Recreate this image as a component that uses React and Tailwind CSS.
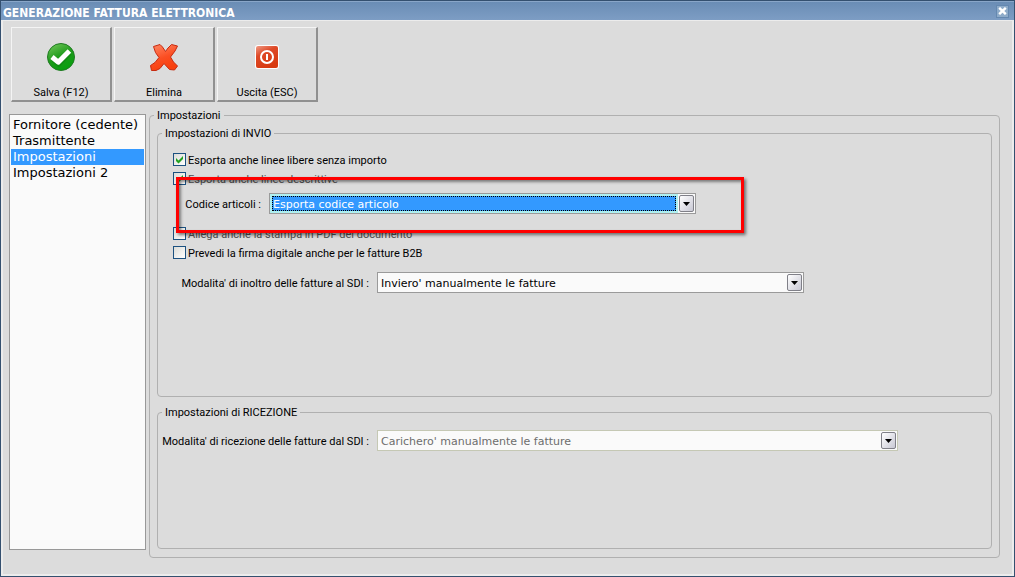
import React from "react";

function SaveIcon() {
  return (
    <svg width="30" height="30" viewBox="0 0 30 30" aria-hidden="true">
      <defs>
        <linearGradient id="save-fill" x1="0.2" y1="0" x2="0.7" y2="1">
          <stop offset="0" stopColor="#6cc455" />
          <stop offset="0.5" stopColor="#1c9a1a" />
          <stop offset="1" stopColor="#05a00c" />
        </linearGradient>
      </defs>
      <circle cx="15" cy="15" r="13.5" fill="url(#save-fill)" stroke="#1f7a22" />
      <path d="M7 17 L12.6 22 L23.8 11" fill="none" stroke="#0c7a10" strokeOpacity="0.5" strokeWidth="5" />
      <path d="M6 15 L12.2 20.2 L23.4 9" fill="none" stroke="#fff" strokeWidth="5" strokeLinejoin="round" />
    </svg>
  );
}

function DeleteIcon() {
  return (
    <svg width="30" height="30" viewBox="0 0 30 30" aria-hidden="true">
      <defs>
        <linearGradient id="delete-fill" x1="0" y1="0" x2="0.4" y2="1">
          <stop offset="0" stopColor="#ff8a68" />
          <stop offset="0.6" stopColor="#fb4e22" />
          <stop offset="1" stopColor="#f8400e" />
        </linearGradient>
      </defs>
      <path
        d="M4.5 4.5 L11 2.5 L13.5 5 L16.5 9.5 L19 6 L22.5 2.5 L28.5 4 L26 9 L21.5 15 L24.5 20 L28.5 24 L25.5 28 L20.5 27.5 L15 21.5 L11 26.5 L7 28.5 L2.5 28.5 L1.5 23.5 L6 20.5 L10 15.5 L6.5 10.5 Z"
        fill="url(#delete-fill)"
        stroke="#c62a10"
        strokeLinejoin="round"
      />
    </svg>
  );
}

function ExitIcon() {
  return (
    <svg width="30" height="30" viewBox="0 0 30 30" aria-hidden="true">
      <defs>
        <linearGradient id="exit-fill" x1="0" y1="0" x2="0.5" y2="1">
          <stop offset="0" stopColor="#f09a84" />
          <stop offset="0.4" stopColor="#de4a28" />
          <stop offset="1" stopColor="#d83a10" />
        </linearGradient>
      </defs>
      <rect x="3" y="3" width="24" height="24" rx="3" fill="#fff" />
      <rect x="4" y="4" width="22" height="22" rx="2" fill="url(#exit-fill)" />
      <circle cx="15" cy="15" r="6" fill="none" stroke="#fff" strokeWidth="2" />
      <path d="M15 12 V18" stroke="#fff" strokeWidth="2" />
    </svg>
  );
}

function ToolButton({ icon, children }) {
  return (
    <button
      type="button"
      className="flex h-[75px] w-[101px] flex-col items-center justify-between border-t border-l border-r-2 border-b-2 border-t-[#f4f4f4] border-l-[#f4f4f4] border-r-[#909090] border-b-[#909090] bg-[#dcdcdc] pt-[14px] leading-[14px]"
    >
      {icon}
      {children}
    </button>
  );
}

function Group({ title, className, bodyClass, children }) {
  return (
    <fieldset className={"flex min-w-0 flex-col rounded border border-[#b0b0b0] " + className}>
      <legend className="ml-1 px-[3px] pt-0.5 leading-3">{title}</legend>
      <div className={"flex flex-1 flex-col " + bodyClass}>{children}</div>
    </fieldset>
  );
}

function CheckRow({ id, checked, dimmed, children }) {
  return (
    <div className="flex h-[19px] items-center gap-0.5 pl-[15px]">
      <span className="grid">
        <input
          id={id}
          type="checkbox"
          defaultChecked={checked}
          className="peer col-start-1 row-start-1 size-[13px] appearance-none border border-[#1c5180] bg-linear-to-br from-[#dcdcd7] to-white"
        />
        <svg
          viewBox="0 0 13 13"
          aria-hidden="true"
          className="pointer-events-none invisible col-start-1 row-start-1 size-[13px] peer-checked:visible"
        >
          <path d="M3 5 L5.5 7.5 L10 3 V6 L5.5 10.5 L3 8 Z" fill="#21a121" />
        </svg>
      </span>
      <label htmlFor={id} className={"pt-0.5 " + (dimmed ? "text-[#505050]" : "text-black")}>
        {children}
      </label>
    </div>
  );
}

function Combo({ id, value, variant = "normal", className }) {
  const border = variant === "disabled" ? "border-[#c5c8b4]" : "border-[#9a9a9a]";
  const text =
    variant === "active" ? "text-white" : variant === "disabled" ? "text-[#6d6d6d]" : "text-black";
  return (
    <div className={"relative h-[21px] min-w-0 border bg-[#fafafa] " + border + " " + className}>
      {variant === "active" && (
        <span className="absolute inset-y-0 left-0 right-[17px] border-2 border-[#b0f0f0] bg-[#3399ff] outline-1 -outline-offset-3 outline-dotted outline-black" />
      )}
      <select
        id={id}
        disabled={variant === "disabled"}
        className={
          "relative block h-full w-full appearance-none bg-transparent pt-0.5 pr-5 pl-[3px] font-['DejaVu_Sans',sans-serif] text-[11px] leading-[17px] opacity-100 outline-none " +
          text
        }
      >
        <option>{value}</option>
      </select>
      <span className="pointer-events-none absolute top-px right-px flex h-[17px] w-[15px] items-center justify-center rounded-xs border border-[#808088] bg-linear-to-br from-white to-[#c8c8d4]">
        <svg width="7" height="4" viewBox="0 0 7 4" aria-hidden="true">
          <path d="M0 0 H7 L3.5 4 Z" fill="#000" />
        </svg>
      </span>
    </div>
  );
}

const sections = ["Fornitore (cedente)", "Trasmittente", "Impostazioni", "Impostazioni 2"];

export default function App() {
  return (
    <div className="flex min-h-screen flex-col border border-[#34506f] bg-[#dcdcdc] font-['Roboto',sans-serif] text-[11px] leading-[14px] text-black">
      <header className="flex h-[19px] items-center justify-between border-t border-[#89a6c8] bg-linear-to-b from-[#6a8db5] to-[#7d9dc4] pr-[6px] pl-0.5">
        <h1 className="pt-1 font-['DejaVu_Sans_Condensed','DejaVu_Sans',sans-serif] text-[12px] leading-[17px] font-bold text-white">
          GENERAZIONE FATTURA ELETTRONICA
        </h1>
        <button
          type="button"
          aria-label="Chiudi"
          className="flex size-[11px] items-center justify-center bg-[#8eabc9] outline-1 outline-[#6488b0]"
        >
          <svg width="9" height="8" viewBox="0 0 9 8" aria-hidden="true">
            <path d="M1.2 0.8 L7.8 7.2 M7.8 0.8 L1.2 7.2" stroke="#fff" strokeWidth="2.4" />
          </svg>
        </button>
      </header>

      <div className="flex flex-1 flex-col border-2 border-t border-[#ececec]">
        <div className="flex gap-0.5 px-2 pt-[6px]">
          <ToolButton icon={<SaveIcon />}>Salva (F12)</ToolButton>
          <ToolButton icon={<DeleteIcon />}>Elimina</ToolButton>
          <ToolButton icon={<ExitIcon />}>Uscita (ESC)</ToolButton>
        </div>

        <main className="flex flex-1 gap-[3px] pt-1.5 pr-3 pb-4 pl-[6px]">
          <ul className="mt-1.5 mb-2 w-[137px] shrink-0 border border-[#989898] bg-[#fafafa] p-px pt-0.5 font-['DejaVu_Sans',sans-serif] text-[13px] leading-4">
            {sections.map((name) => (
              <li key={name}>
                <button
                  type="button"
                  className={
                    "block w-full pl-0.5 text-left whitespace-nowrap " +
                    (name === "Impostazioni" ? "bg-[#3399ff] text-white" : "")
                  }
                >
                  {name}
                </button>
              </li>
            ))}
          </ul>

          <Group title="Impostazioni" className="flex-1" bodyClass="gap-2 px-[7px] pt-1 pb-2">
            <Group title="Impostazioni di INVIO" className="flex-1" bodyClass="pt-[10px]">
              <CheckRow id="free-lines" checked>Esporta anche linee libere senza importo</CheckRow>
              <CheckRow id="text-lines" checked dimmed>Esporta anche linee descrittive</CheckRow>
              <div className="relative mt-[5px] flex items-center">
                <label htmlFor="item-code" className="w-[111px] shrink-0 pt-0.5 pr-2 text-right">
                  Codice articoli :
                </label>
                <Combo id="item-code" value="Esporta codice articolo" variant="active" className="w-[427px]" />
                <div className="pointer-events-none absolute -top-4 left-[18px] h-14 w-[568px] border-3 border-[#ff0000] shadow-[2px_2px_3px_#00000080,inset_2px_2px_3px_#00000070]" />
              </div>
              <div className="mt-[10px]">
                <CheckRow id="attach-pdf" dimmed>Allega anche la stampa in PDF del documento</CheckRow>
                <CheckRow id="sign-b2b">Prevedi la firma digitale anche per le fatture B2B</CheckRow>
              </div>
              <div className="mt-[10px] flex items-center">
                <label htmlFor="send-mode" className="w-[219px] shrink-0 pt-0.5 pr-2 text-right whitespace-nowrap">
                  Modalita' di inoltro delle fatture al SDI :
                </label>
                <Combo id="send-mode" value="Inviero' manualmente le fatture" className="w-[427px]" />
              </div>
            </Group>

            <Group title="Impostazioni di RICEZIONE" className="h-36" bodyClass="pt-[11px]">
              <div className="flex items-center">
                <label htmlFor="receive-mode" className="w-[219px] shrink-0 pt-0.5 pr-2 text-right whitespace-nowrap">
                  Modalita' di ricezione delle fatture dal SDI :
                </label>
                <Combo
                  id="receive-mode"
                  value="Carichero' manualmente le fatture"
                  variant="disabled"
                  className="w-[521px]"
                />
              </div>
            </Group>
          </Group>
        </main>
      </div>
    </div>
  );
}
